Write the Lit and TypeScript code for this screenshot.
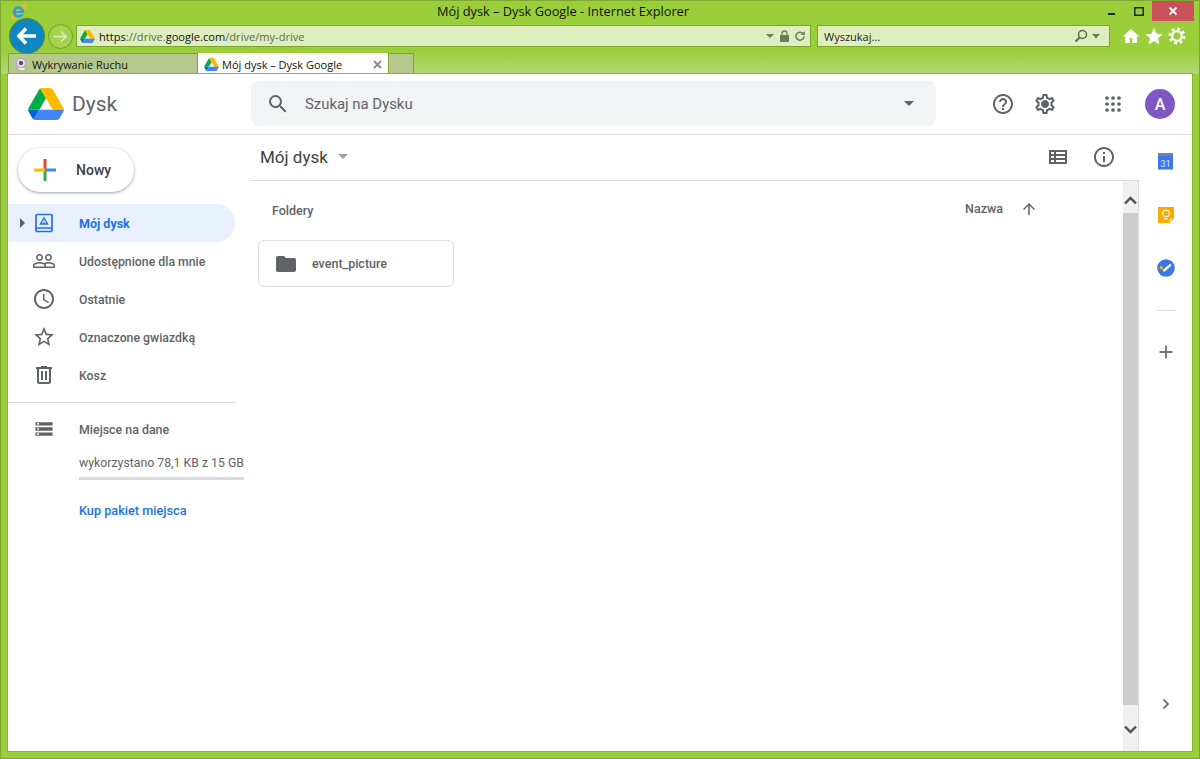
import { LitElement, html, css } from "lit";
import { customElement } from "lit/decorators.js";

const driveLogo = (w: number, h: number) => html`<svg width=${w} height=${h} viewBox="0 0 87.3 78">
  <path d="M6.6 66.85l3.85 6.65c.8 1.4 1.95 2.5 3.3 3.3L27.5 53H0c0 1.55.4 3.1 1.2 4.5z" fill="#0066da"/>
  <path d="M43.65 25L29.9 1.2c-1.35.8-2.5 1.9-3.3 3.3L1.2 48.5C.4 49.9 0 51.45 0 53h27.5z" fill="#00ac47"/>
  <path d="M29.9 1.2C31.25.4 32.8 0 34.4 0h18.5c1.6 0 3.15.45 4.5 1.2 1.35.8 2.5 1.9 3.3 3.3L86.1 48.5c.8 1.4 1.2 2.95 1.2 4.5H59.8L43.65 25 32 6z" fill="#ffba00"/>
  <path d="M27.5 53L13.75 76.8c1.35.8 2.9 1.2 4.5 1.2h50.8c1.6 0 3.15-.45 4.5-1.2 1.35-.8 2.5-1.9 3.3-3.3l9.25-16c.8-1.4 1.2-2.95 1.2-4.5z" fill="#4285f4"/>
</svg>`;

const mat = (d: string, size = 24, fill = "#5f6368", vb = "0 0 24 24") => html`<svg width=${size} height=${size} viewBox=${vb} fill=${fill}><path d=${d}/></svg>`;

const P = {
  search: "M15.5 14h-.79l-.28-.27A6.47 6.47 0 0 0 16 9.5 6.5 6.5 0 1 0 9.5 16c1.61 0 3.09-.59 4.23-1.57l.27.28v.79l5 4.99L20.49 19l-4.99-5zm-6 0C7.01 14 5 11.99 5 9.5S7.01 5 9.5 5 14 7.01 14 9.5 11.99 14 9.5 14z",
  help: "M11 18h2v-2h-2v2zm1-16C6.48 2 2 6.48 2 12s4.48 10 10 10 10-4.48 10-10S17.52 2 12 2zm0 18c-4.41 0-8-3.59-8-8s3.59-8 8-8 8 3.59 8 8-3.59 8-8 8zm0-14c-2.21 0-4 1.79-4 4h2c0-1.1.9-2 2-2s2 .9 2 2c0 2-3 1.75-3 5h2c0-2.25 3-2.5 3-5 0-2.21-1.79-4-4-4z",
  gear: "M19.43 12.98c.04-.32.07-.64.07-.98s-.03-.66-.07-.98l2.11-1.65c.19-.15.24-.42.12-.64l-2-3.46c-.12-.22-.39-.3-.61-.22l-2.49 1c-.52-.4-1.08-.73-1.69-.98l-.38-2.65A.49.49 0 0 0 14 2h-4c-.25 0-.46.18-.49.42l-.38 2.65c-.61.25-1.17.59-1.69.98l-2.49-1c-.23-.09-.49 0-.61.22l-2 3.46c-.13.22-.07.49.12.64l2.11 1.65c-.04.32-.07.65-.07.98s.03.66.07.98l-2.11 1.65c-.19.15-.24.42-.12.64l2 3.46c.12.22.39.3.61.22l2.49-1c.52.4 1.08.73 1.69.98l.38 2.65c.03.24.24.42.49.42h4c.25 0 .46-.18.49-.42l.38-2.65c.61-.25 1.17-.59 1.69-.98l2.49 1c.23.09.49 0 .61-.22l2-3.46c.12-.22.07-.49-.12-.64l-2.11-1.65zm-1.98-1.71c.04.31.05.52.05.73s-.02.43-.05.73l-.14 1.13.89.7 1.08.84-.7 1.21-1.27-.51-1.04-.42-.9.68c-.43.32-.84.56-1.25.73l-1.06.43-.16 1.13-.2 1.35h-1.4l-.19-1.35-.16-1.13-1.06-.43c-.43-.18-.83-.41-1.23-.71l-.91-.7-1.06.43-1.27.51-.7-1.21 1.08-.84.89-.7-.14-1.13c-.03-.31-.05-.54-.05-.74s.02-.43.05-.73l.14-1.13-.89-.7-1.08-.84.7-1.21 1.27.51 1.04.42.9-.68c.43-.32.84-.56 1.25-.73l1.06-.43.16-1.13.2-1.35h1.39l.19 1.35.16 1.13 1.06.43c.43.18.83.41 1.23.71l.91.7 1.06-.43 1.27-.51.7 1.21-1.07.85-.89.7.14 1.13zM12 8c-2.21 0-4 1.79-4 4s1.79 4 4 4 4-1.79 4-4-1.79-4-4-4z",
  people: "M16.5 13c-1.2 0-3.07.34-4.5 1-1.43-.67-3.3-1-4.5-1C5.33 13 1 14.08 1 16.25V19h22v-2.75c0-2.17-4.33-3.25-6.5-3.25zm-4 4.5h-10v-1.25c0-.54 2.56-1.75 5-1.75s5 1.21 5 1.75v1.25zm9 0H14v-1.25c0-.46-.2-.86-.52-1.22.88-.3 1.96-.53 3.02-.53 2.44 0 5 1.21 5 1.75v1.25zM7.5 12c1.93 0 3.5-1.57 3.5-3.5S9.43 5 7.5 5 4 6.57 4 8.5 5.57 12 7.5 12zm0-5.5c1.1 0 2 .9 2 2s-.9 2-2 2-2-.9-2-2 .9-2 2-2zm9 5.5c1.93 0 3.5-1.57 3.5-3.5S18.43 5 16.5 5 13 6.57 13 8.5s1.57 3.5 3.5 3.5zm0-5.500c1.100 0 2 .9 2 2s-.9 2-2 2-2-.9-2-2 .9-2 2-2z",
  clock: "M11.99 2C6.47 2 2 6.48 2 12s4.47 10 9.99 10C17.52 22 22 17.52 22 12S17.52 2 11.99 2zM12 20c-4.42 0-8-3.58-8-8s3.58-8 8-8 8 3.58 8 8-3.58 8-8 8zm.5-13H11v6l5.25 3.15.75-1.23-4.5-2.67z",
  star: "M22 9.24l-7.19-.62L12 2 9.19 8.63 2 9.24l5.46 4.73L5.82 21 12 17.27 18.18 21l-1.63-7.03L22 9.24zM12 15.4l-3.76 2.27 1-4.28-3.32-2.88 4.38-.38L12 6.1l1.71 4.04 4.38.38-3.32 2.88 1 4.28L12 15.4z",
  trash: "M15 4V3H9v1H4v2h1v13c0 1.1.9 2 2 2h10c1.1 0 2-.9 2-2V6h1V4h-5zm2 15H7V6h10v13zM9 8h2v9H9zm4 0h2v9h-2z",
  storage: "M2 20h20v-4H2v4zm2-3h2v2H4v-2zM2 4v4h20V4H2zm4 3H4V5h2v2zm-4 7h20v-4H2v4zm2-3h2v2H4v-2z",
  list: "M3 5v14h18V5H3zm5 12H5v-2h3v2zm0-4H5v-2h3v2zm0-4H5V7h3v2zm11 8H10v-2h9v2zm0-4H10v-2h9v2zm0-4H10V7h9v2z",
  info: "M11 7h2v2h-2V7zm0 4h2v6h-2v-6zm1-9C6.48 2 2 6.48 2 12s4.48 10 10 10 10-4.48 10-10S17.52 2 12 2zm0 18c-4.41 0-8-3.59-8-8s3.59-8 8-8 8 3.59 8 8-3.59 8-8 8z",
  up: "M4 12l1.41 1.41L11 7.83V20h2V7.83l5.58 5.59L20 12l-8-8-8 8z",
  folder: "M10 4H4c-1.1 0-2 .9-2 2v12c0 1.1.9 2 2 2h16c1.1 0 2-.9 2-2V8c0-1.1-.9-2-2-2h-8l-2-2z",
  plus: "M19 13h-6v6h-2v-6H5v-2h6V5h2v6h6v2z",
};

const ieIcon = html`<svg width="17" height="17" viewBox="0 0 17 17">
  <path d="M1.800 14.500C4 9.500 9 3.500 14 1.800c2.400-.8 2.600 1.500.8 4.700" fill="none" stroke="#f2bd24" stroke-width="1.800"/>
  <path d="M1.900 14.600c-.9 1.800 1.500 2 4 .7" fill="none" stroke="#f2bd24" stroke-width="1.500"/>
  <path d="M8.500 3.300a5.700 5.700 0 1 0 5.300 7.800h-3.100a2.700 2.700 0 0 1-4.800-1.200h8.200c.3-3.500-2-6.600-5.600-6.600zM5.900 7.900a2.700 2.700 0 0 1 5.200 0z" fill="#3a9ad9" fill-rule="evenodd"/>
</svg>`;

const appsIcon = html`<svg width="24" height="24" viewBox="0 0 24 24" fill="#5f6368">
  ${[6, 12, 18].map((y) => [6, 12, 18].map((x) => html`<svg x=${x - 2} y=${y - 2} width="4" height="4"><circle cx="2" cy="2" r="1.850"/></svg>`))}
</svg>`;

const navItems = [
  ["Udostępnione dla mnie", P.people],
  ["Ostatnie", P.clock],
  ["Oznaczone gwiazdką", P.star],
  ["Kosz", P.trash],
];

@customElement("app-root")
export class AppRoot extends LitElement {
  static styles = css`
    :host { display: block; width: 1200px; height: 759px; overflow: hidden; font-family: Roboto, "Liberation Sans", sans-serif; }
    * { box-sizing: border-box; }
    svg { display: block; flex: none; }
    .window { width: 1200px; height: 759px; background: #9bce3b; border: 1px solid #7da52f; display: flex; flex-direction: column; padding: 0 7px 7px 7px; }
    .chrome-text { font-family: "Open Sans", "Noto Sans", sans-serif; }

    .titlebar { height: 20px; display: flex; align-items: center; position: relative; }
    .ie { margin: 1px 0 0 2px; }
    .title { position: absolute; left: 0; width: 1110px; text-align: center; font-size: 12.800px; color: #111; top: 2px; line-height: 16px; }
    .winbtns { margin-left: auto; display: flex; align-items: flex-start; height: 20px; margin-right: -2px; }
    .winbtn { width: 27px; height: 20px; display: flex; align-items: center; justify-content: center; }
    .winbtn.close { width: 42px; background: #c9515a; color: #fff; }

    .toolbar { height: 30px; display: flex; align-items: center; position: relative; }
    .back { width: 36px; height: 36px; margin: 0 0 0 1px; border-radius: 50%; background: #0f86c4; border: 1px solid #5c8a22; display: flex; align-items: center; justify-content: center; flex: none; z-index: 1; }
    .fwd { width: 25px; height: 25px; margin-left: 3px; border-radius: 50%; border: 1px solid #6f9c25; display: flex; align-items: center; justify-content: center; flex: none; background: #a6d34e; }
    .addr { margin-left: 3px; width: 735px; height: 22px; background: #dfeebf; border: 1px solid #78a42a; display: flex; align-items: center; padding: 0 4px 0 3px; gap: 4px; font-size: 11.100px; color: #5a6b48; }
    .addr b { font-weight: 400; color: #111; }
    .addr .url { flex: 1; white-space: nowrap; }
    .tools { display: flex; align-items: center; gap: 4px; }
    .search-ie { margin-left: 6px; width: 293px; height: 22px; background: #dfeebf; border: 1px solid #78a42a; display: flex; align-items: center; justify-content: space-between; padding: 0 9px 0 6px; font-size: 11px; color: #222; }
    .ieicons { margin-left: 11px; display: flex; gap: 3px; }

    .tabs { height: 23px; display: flex; align-items: flex-end; background: linear-gradient(#9bce3b 0%, #b4d878 100%); margin: 0 -7px 0 -7px; padding: 0 0 0 7px; flex: none; }
    .tab { height: 21px; display: flex; align-items: center; gap: 3px; font-size: 10.900px; color: #111; background: #b5c98c; border: 1px solid #7da52f; border-bottom: 0; padding: 0 5px; width: 190px; white-space: nowrap; }
    .tab.active { background: #fff; border-color: #fff; font-size: 11px; }
    .tab.empty { width: 26px; }
    .tab .x { margin-left: auto; display: flex; }

    .page { flex: 1; min-height: 0; background: #fff; display: flex; flex-direction: column; outline: 1px solid #86b332; color: #5f6368; }
    .gbar { height: 61px; border-bottom: 1px solid #dadce0; display: flex; align-items: center; padding-left: 20px; flex: none; }
    .logo { display: flex; align-items: center; width: 223px; gap: 8px; }
    .logo span { font-size: 21px; color: #5f6368; }
    .gsearch { width: 685px; height: 45px; margin-top: -1px; background: #f1f3f4; border-radius: 8px; display: flex; align-items: center; padding: 0 22px 0 15px; font-size: 14.900px; color: #5f6368; }
    .gsearch .t { margin-left: 15px; flex: 1; }
    .caret { width: 0; height: 0; border-left: 5px solid transparent; border-right: 5px solid transparent; border-top: 5px solid #5f6368; }
    .gicons { display: flex; align-items: center; margin-left: 55px; }
    .gicons .gap1 { margin-left: 18px; }
    .gicons .gap2 { margin-left: 44px; }
    .avatar { margin-left: 20px; width: 30px; height: 30px; border-radius: 50%; background: #7e57c2; color: #fff; display: flex; align-items: center; justify-content: center; font-size: 16px; font-weight: 500; }

    .body { flex: 1; min-height: 0; display: flex; }
    .side { width: 242px; flex: none; display: flex; flex-direction: column; padding-top: 13px; }
    .new { margin-left: 10px; width: 116px; height: 44px; border-radius: 22px; background: #fff; box-shadow: 0 1px 2px rgba(60,64,67,.3), 0 1px 3px 1px rgba(60,64,67,.15); display: flex; align-items: center; padding-left: 15px; font-size: 14px; font-weight: 500; color: #3c4043; gap: 19px; }
    .nav { margin-top: 12px; display: flex; flex-direction: column; }
    .row { height: 38px; width: 227px; display: flex; align-items: center; position: relative; padding-left: 24px; font-size: 12.300px; font-weight: 500; color: #5f6368; gap: 23px; white-space: nowrap; }
    .row .lbl { padding-top: 2px; }
    .row.on { background: #e8f0fe; color: #1a73e8; border-radius: 0 19px 19px 0; font-weight: 700; font-size: 12.500px; }
    .row.on .tri { position: absolute; left: 12px; top: 14px; width: 0; height: 0; border-top: 5px solid transparent; border-bottom: 5px solid transparent; border-left: 5px solid #5f6368; }
    .divider { margin-top: 8px; width: 228px; height: 1px; background: #dadce0; }
    .storage { display: flex; margin-top: 14px; padding-left: 24px; gap: 23px; }
    .storage .col { display: flex; flex-direction: column; width: 165px; font-size: 12.400px; }
    .st-h { font-weight: 500; height: 24px; display: flex; align-items: center; }
    .st-u { margin-top: 12px; font-size: 12.300px; white-space: nowrap; height: 20px; display: flex; align-items: center; font-weight: 400; }
    .bar { margin-top: 4px; height: 3px; background: #dadce0; }
    .buy { margin-top: 23px; color: #1a73e8; font-weight: 500; font-size: 12.700px; }

    .main { flex: 1; min-width: 0; display: flex; flex-direction: column; }
    .mhead { height: 46px; border-bottom: 1px solid #dadce0; display: flex; align-items: center; padding: 0 23px 2px 10px; flex: none; }
    .mhead .name { font-size: 17px; color: #3c4043; }
    .mhead .caret { margin-left: 10px; border-top-color: #9aa0a6; }
    .mhead .acts { margin-left: auto; display: flex; gap: 22px; }
    .scroll { flex: 1; min-height: 0; display: flex; }
    .files { flex: 1; min-width: 0; padding: 0 0 0 8px; }
    .fhead { height: 59px; display: flex; align-items: center; font-size: 12.500px; font-weight: 500; padding: 0 85px 0 14px; }
    .fhead .sort { margin-left: auto; margin-bottom: 4px; display: flex; align-items: center; gap: 17px; }
    .card { width: 196px; height: 47px; border: 1px solid #dadce0; border-radius: 6px; display: flex; align-items: center; padding-left: 15px; gap: 14px; font-size: 12.500px; font-weight: 500; color: #5f6368; }
    .sb { width: 16px; flex: none; background: #f0f0f0; border-right: 1px solid #dadce0; display: flex; flex-direction: column; }
    .sb .arrow { height: 32px; padding-top: 7px; display: flex; align-items: center; justify-content: center; flex: none; }
    .sb .arrow.down { height: 46px; padding-top: 3px; }
    .sb .thumb { flex: 1; background: #cdcdcd; width: 15px; }
    .rail { width: 53px; flex: none; display: flex; flex-direction: column; align-items: center; position: relative; }
    .rail .it { height: 53px; display: flex; align-items: center; justify-content: center; flex: none; }
    .rail .sep { width: 20px; height: 1px; background: #dadce0; margin: 16px 0 30px; }
    .rail .next { margin-top: auto; margin-bottom: 41px; }
  `;

  render() {
    return html`<div class="window">
      <div class="titlebar chrome-text">
        <div class="ie">${ieIcon}</div>
        <div class="title">Mój dysk – Dysk Google - Internet Explorer</div>
        <div class="winbtns">
          <div class="winbtn"><svg width="9" height="9"><rect x="1" y="6" width="7" height="2" fill="#222"/></svg></div>
          <div class="winbtn"><svg width="10" height="9"><rect x=".75" y=".75" width="8.500" height="7.500" fill="none" stroke="#222" stroke-width="1.500"/></svg></div>
          <div class="winbtn close"><svg width="10" height="10"><path d="M1.500 1.500l7 7M8.500 1.500l-7 7" stroke="#fff" stroke-width="1.800"/></svg></div>
        </div>
      </div>
      <div class="toolbar chrome-text">
        <div class="back"><svg width="22" height="20" viewBox="0 0 22 20"><path d="M10 2.500L3 10l7 7.500M3.500 10H20" fill="none" stroke="#fff" stroke-width="3.600"/></svg></div>
        <div class="fwd"><svg width="15" height="13" viewBox="0 0 15 13"><path d="M8 1.500l5 5-5 5M13 6.500H1" fill="none" stroke="#dfeebf" stroke-width="1.700"/></svg></div>
        <div class="addr">
          ${driveLogo(15, 13)}
          <span class="url"><b>https</b>://drive.<b>google.com</b>/drive/my-drive</span>
          <span class="tools">
            <svg width="10" height="6"><path d="M1 1h8L5 5z" fill="#6c7a5c"/></svg>
            <svg width="11" height="12" viewBox="0 0 11 12"><rect x="1" y="5" width="9" height="7" fill="#6c7a5c"/><path d="M3 5V3.500a2.500 2.500 0 0 1 5 0V5" fill="none" stroke="#6c7a5c" stroke-width="1.300"/></svg>
            <svg width="12" height="12" viewBox="0 0 12 12"><path d="M10 6.500a4 4 0 1 1-1.300-3.300" fill="none" stroke="#6c7a5c" stroke-width="1.500"/><path d="M10.800 1v4h-4z" fill="#6c7a5c"/></svg>
          </span>
        </div>
        <div class="search-ie">
          <span>Wyszukaj...</span>
          <span class="tools">
            <svg width="14" height="14" viewBox="0 0 14 14"><circle cx="8.500" cy="5.500" r="4" fill="none" stroke="#5c6b4a" stroke-width="1.500"/><path d="M5.500 8.500l-4 4" stroke="#5c6b4a" stroke-width="2"/></svg>
            <svg width="8" height="5"><path d="M0 0h8L4 4.500z" fill="#6c7a5c"/></svg>
          </span>
        </div>
        <div class="ieicons">
          <svg width="20" height="20" viewBox="0 0 24 24" fill="#fff"><path d="M12 3.500L2 12.500h3v8h5.500v-6h3v6H19v-8h3z"/></svg>
          <svg width="20" height="20" viewBox="0 0 24 24" fill="#fff"><path d="M12 2l3 7.200 7.500.6-5.700 5 1.700 7.400L12 18.300l-6.500 3.900 1.700-7.400-5.700-5 7.500-.6z"/></svg>
          <svg width="20" height="20" viewBox="0 0 20 20" fill="none" stroke="#fff"><circle cx="10" cy="10" r="7.200" stroke-width="2.600" stroke-dasharray="2.830 2.830"/><circle cx="10" cy="10" r="4.800" stroke-width="2.300"/></svg>
        </div>
      </div>
      <div class="tabs chrome-text">
        <div class="tab">
          <svg width="15" height="15" viewBox="0 0 15 15"><path d="M2 11l5-1.500 6 2-5 2.500z" fill="#f2f2f2" stroke="#888" stroke-width=".5"/><circle cx="7" cy="6" r="4.500" fill="#efe6f2" stroke="#b59ec2"/><circle cx="7" cy="6" r="2.200" fill="#5d4a6e"/></svg>
          Wykrywanie Ruchu
        </div>
        <div class="tab active">
          ${driveLogo(15, 13)}
          Mój dysk – Dysk Google
          <span class="x"><svg width="9" height="9"><path d="M1 1l7 7M8 1L1 8" stroke="#8a8a8a" stroke-width="1.800"/></svg></span>
        </div>
        <div class="tab empty"></div>
      </div>
      <div class="page">
        <div class="gbar">
          <div class="logo">${driveLogo(36, 32)}<span>Dysk</span></div>
          <div class="gsearch">${mat(P.search)}<span class="t">Szukaj na Dysku</span><span class="caret"></span></div>
          <div class="gicons">
            ${mat(P.help)}
            <span class="gap1">${mat(P.gear)}</span>
            <span class="gap2">${appsIcon}</span>
            <span class="avatar">A</span>
          </div>
        </div>
        <div class="body">
          <div class="side">
            <div class="new">
              <svg width="24" height="24" viewBox="0 0 24 24">
                <rect x="10.500" y="1" width="3" height="11" fill="#ea4335"/>
                <rect x="10.500" y="12" width="3" height="11" fill="#34a853"/>
                <rect x="1" y="10.500" width="11" height="3" fill="#fbbc04"/>
                <rect x="12" y="10.500" width="11" height="3" fill="#4285f4"/>
              </svg>
              <span>Nowy</span>
            </div>
            <div class="nav">
              <div class="row on">
                <span class="tri"></span>
                <svg width="24" height="24" viewBox="0 0 24 24"><rect x="4" y="3.500" width="16" height="17" rx="1" fill="none" stroke="#1a73e8" stroke-width="1.700"/><path d="M4 17h16" stroke="#1a73e8" stroke-width="1.500"/><path d="M12 7l3.500 6h-7zM11 12.200h2" fill="none" stroke="#1a73e8" stroke-width="1.400"/></svg>
                <span>Mój dysk</span>
              </div>
              ${navItems.map(([t, d]) => html`<div class="row">${mat(d)}<span class="lbl">${t}</span></div>`)}
            </div>
            <div class="divider"></div>
            <div class="storage">
              ${mat(P.storage, 24, "#5f6368", "-2 -2 28 28")}
              <div class="col">
                <div class="st-h">Miejsce na dane</div>
                <div class="st-u">wykorzystano 78,1 KB z 15 GB</div>
                <div class="bar"></div>
                <div class="buy">Kup pakiet miejsca</div>
              </div>
            </div>
          </div>
          <div class="main">
            <div class="mhead">
              <span class="name">Mój dysk</span><span class="caret"></span>
              <span class="acts">${mat(P.list)}${mat(P.info)}</span>
            </div>
            <div class="scroll">
              <div class="files">
                <div class="fhead"><span>Foldery</span><span class="sort"><span>Nazwa</span>${mat(P.up, 18)}</span></div>
                <div class="card">${mat(P.folder)}<span>event_picture</span></div>
              </div>
              <div class="sb">
                <div class="arrow"><svg width="13" height="9" viewBox="0 0 13 9"><path d="M1 7.500l5.500-5.500 5.500 5.500" fill="none" stroke="#505050" stroke-width="2.400"/></svg></div>
                <div class="thumb"></div>
                <div class="arrow down"><svg width="13" height="9" viewBox="0 0 13 9"><path d="M1 1.500l5.500 5.500 5.500-5.500" fill="none" stroke="#505050" stroke-width="2.400"/></svg></div>
              </div>
            </div>
          </div>
          <div class="rail">
            <div class="it">
              <svg width="15" height="17" viewBox="0 0 15 17"><rect x="0" y="0" width="15" height="4" fill="#6f84a8"/><rect x="0" y="2.500" width="15" height="14" fill="#3b78e7"/><text x="7.500" y="13.500" font-size="9.500" text-anchor="middle" fill="#d5e3fb" font-family="Roboto">31</text></svg>
            </div>
            <div class="it">
              <svg width="16" height="16" viewBox="0 0 16 16"><path d="M0 0h16v11.500L11.500 16H0z" fill="#f9ab00"/><path d="M11.500 16v-4.500H16z" fill="#fdd663"/><circle cx="8" cy="6.500" r="3.300" fill="none" stroke="#fff" stroke-width="1.100"/><path d="M6.500 11.700h3" stroke="#fff" stroke-width="1.300"/></svg>
            </div>
            <div class="it">
              <svg width="18" height="18" viewBox="0 0 18 18"><circle cx="9" cy="9" r="8.800" fill="#3b78e7"/><path d="M6.300 12.500l-.3-1.800 7-6 1.500 1.700-6.800 6.100z" fill="#fff"/><circle cx="4.300" cy="8.800" r="1.700" fill="#fbbc04"/></svg>
            </div>
            <div class="sep"></div>
            ${mat(P.plus, 22, "#70757a")}
            <div class="next"><svg width="8" height="12" viewBox="0 0 8 12"><path d="M1.500 1.500L6 6l-4.500 4.500" fill="none" stroke="#5f6368" stroke-width="1.700"/></svg></div>
          </div>
        </div>
      </div>
    </div>`;
  }
}
